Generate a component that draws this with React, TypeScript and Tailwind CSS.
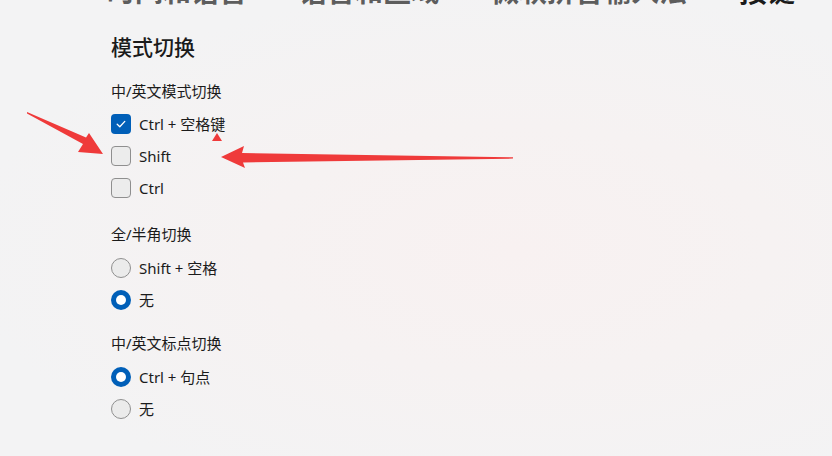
import React from "react";

const Check = () => (
  <svg width="12" height="12" viewBox="0 0 12 12" fill="none">
    <path d="M2.2 6.3 L4.8 8.8 L9.8 3.4" stroke="#ffffff" strokeWidth="1.3" strokeLinecap="round" strokeLinejoin="round" />
  </svg>
);

function CheckRow({ checked, label }: { checked?: boolean; label: string }) {
  return (
    <div className="flex items-center h-[32px]">
      {checked ? (
        <div className="w-[20px] h-[20px] rounded-[4px] bg-[#005fb8] flex items-center justify-center">
          <Check />
        </div>
      ) : (
        <div className="w-[20px] h-[20px] rounded-[4px] border border-[#8f8f8f] bg-[#ececec]" />
      )}
      <span className="ml-[8px] text-[15px] leading-[20px] text-[#1b1b1b]">{label}</span>
    </div>
  );
}

function RadioRow({ checked, label }: { checked?: boolean; label: string }) {
  return (
    <div className="flex items-center h-[32px]">
      {checked ? (
        <div className="w-[20px] h-[20px] rounded-full bg-[#005fb8] flex items-center justify-center">
          <div className="w-[10px] h-[10px] rounded-full bg-white" />
        </div>
      ) : (
        <div className="w-[20px] h-[20px] rounded-full border border-[#8f8f8f] bg-[#ebebeb]" />
      )}
      <span className="ml-[8px] text-[15px] leading-[20px] text-[#1b1b1b]">{label}</span>
    </div>
  );
}

const Chevron = () => (
  <svg width="14" height="14" viewBox="0 0 14 14" className="mx-[19px]" fill="none">
    <path d="M4.5 1.5 L10 7 L4.5 12.5" stroke="#5d5d5d" strokeWidth="1.4" strokeLinecap="round" strokeLinejoin="round" />
  </svg>
);

export default function App() {
  return (
    <div className="relative w-[832px] h-[456px] overflow-hidden bg-[radial-gradient(ellipse_at_62%_55%,#f8f1f1_0%,#f6f2f2_35%,#f3f3f4_75%)] font-['Noto_Sans','Noto_Sans_CJK_SC',sans-serif]">
      <div className="pl-[111px]">
        <div className="flex items-center h-[28px] -mt-[23px] -ml-[4px] text-[28px] leading-[28px] font-semibold whitespace-nowrap">
          <span className="text-[#5d5d5d]">时间和语言</span>
          <Chevron />
          <span className="text-[#5d5d5d]">语言和区域</span>
          <Chevron />
          <span className="text-[#5d5d5d]">微软拼音输入法</span>
          <Chevron />
          <span className="text-[#1b1b1b]">按键</span>
        </div>

        <div className="mt-[28px] text-[21px] leading-[28px] font-medium text-[#1b1b1b]">模式切换</div>

        <div className="mt-[20px] text-[15px] leading-[20px] text-[#1b1b1b]">中/英文模式切换</div>
        <div className="mt-[7px]">
          <CheckRow checked label="Ctrl + 空格键" />
          <CheckRow label="Shift" />
          <CheckRow label="Ctrl" />
        </div>

        <div className="mt-[20px] text-[15px] leading-[20px] text-[#1b1b1b]">全/半角切换</div>
        <div className="mt-[8px]">
          <RadioRow label="Shift + 空格" />
          <RadioRow checked label="无" />
        </div>

        <div className="mt-[17px] text-[15px] leading-[20px] text-[#1b1b1b]">中/英文标点切换</div>
        <div className="mt-[8px]">
          <RadioRow checked label="Ctrl + 句点" />
          <RadioRow label="无" />
        </div>
      </div>

      <svg className="absolute inset-0 pointer-events-none" width="832" height="456" viewBox="0 0 832 456">
        <polygon
          points="27,112 86,137.5 89,133 103,154 78,152 83,144 27,113.5"
          fill="#ef3a3a"
        />
        <polygon
          points="221,157 244,146 242,153 513,157.3 513,158.6 243,162.5 245,168"
          fill="#ef3a3a"
        />
        <polygon points="217,133 212,141 222,141" fill="#ef3a3a" />
      </svg>
    </div>
  );
}
